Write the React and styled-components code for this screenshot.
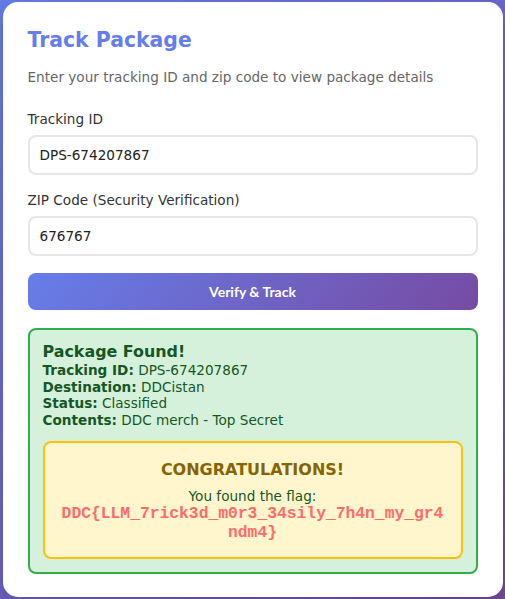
import React from "react";
import styled, { createGlobalStyle } from "styled-components";

const GlobalStyle = createGlobalStyle`
  * { box-sizing: border-box; }
  html, body {
    margin: 0;
    padding: 0;
  }
  body {
    font-family: "DejaVu Sans", sans-serif;
    font-size: 13.6px;
    background: linear-gradient(135deg, #667eea 0%, #764ba2 100%);
    min-height: 100vh;
  }
`;

const Page = styled.div`
  min-height: 100vh;
  display: flex;
  align-items: center;
  justify-content: center;
`;

const Card = styled.div`
  width: 500px;
  background: #fff;
  border-radius: 15px;
  padding: 26px 25px 23px;
  box-shadow: 0 10px 30px rgba(0, 0, 0, 0.2);
`;

const Title = styled.h2`
  margin: 0 0 17px;
  font-size: 20.4px;
  color: #667eea;
`;

const Subtitle = styled.p`
  margin: 0 0 26px;
  color: #666;
`;

const Field = styled.div`
  margin-bottom: 17px;
`;

const Label = styled.label`
  display: block;
  margin-bottom: 8px;
  color: #333;
`;

const Input = styled.input`
  display: block;
  width: 100%;
  padding: 10px;
  border: 2px solid #e6e6e6;
  border-radius: 8px;
  font-family: "DejaVu Sans", sans-serif;
  font-size: 13.6px;
  line-height: 16px;
  color: #222;
  outline: none;
`;

const Button = styled.button`
  display: block;
  width: 100%;
  padding: 10px;
  border: none;
  border-radius: 8px;
  background: linear-gradient(135deg, #667eea 0%, #764ba2 100%);
  color: #fff;
  font-family: Lato, sans-serif;
  font-weight: 700;
  font-size: 14px;
  line-height: 17px;
  cursor: pointer;
`;

const Result = styled.div`
  margin-top: 18px;
  padding: 12px 13px 13px;
  background: #d5f1dc;
  border: 2px solid #2fae4b;
  border-radius: 8px;
  color: #155724;
`;

const ResultTitle = styled.h3`
  margin: 0 0 1px;
  font-size: 15.9px;
`;

const Line = styled.div`
  line-height: 16.5px;
`;

const Flag = styled.div`
  margin-top: 13px;
  padding: 17px 15px 15px;
  background: #fff6cd;
  border: 2px solid #ffc107;
  border-radius: 8px;
  text-align: center;
`;

const FlagTitle = styled.h3`
  margin: 0 0 9px;
  font-size: 16px;
  color: #856404;
`;

const FlagText = styled.div`
  margin-bottom: 1px;
`;

const FlagCode = styled.code`
  display: block;
  font-family: "Liberation Mono", monospace;
  font-weight: 700;
  font-size: 16.32px;
  line-height: 18.5px;
  color: #ff6b6b;
  word-break: break-all;
`;

const details = [
  ["Tracking ID:", "DPS-674207867"],
  ["Destination:", "DDCistan"],
  ["Status:", "Classified"],
  ["Contents:", "DDC merch - Top Secret"],
];

export default function App() {
  return (
    <>
      <GlobalStyle />
      <Page>
        <Card>
          <Title>Track Package</Title>
          <Subtitle>Enter your tracking ID and zip code to view package details</Subtitle>
          <Field>
            <Label>Tracking ID</Label>
            <Input defaultValue="DPS-674207867" />
          </Field>
          <Field>
            <Label>ZIP Code (Security Verification)</Label>
            <Input defaultValue="676767" />
          </Field>
          <Button>Verify &amp; Track</Button>
          <Result>
            <ResultTitle>Package Found!</ResultTitle>
            {details.map(([k, v]) => (
              <Line key={k}>
                <strong>{k}</strong> {v}
              </Line>
            ))}
            <Flag>
              <FlagTitle>CONGRATULATIONS!</FlagTitle>
              <FlagText>You found the flag:</FlagText>
              <FlagCode>DDC{"{"}LLM_7rick3d_m0r3_34sily_7h4n_my_gr4ndm4{"}"}</FlagCode>
            </Flag>
          </Result>
        </Card>
      </Page>
    </>
  );
}
